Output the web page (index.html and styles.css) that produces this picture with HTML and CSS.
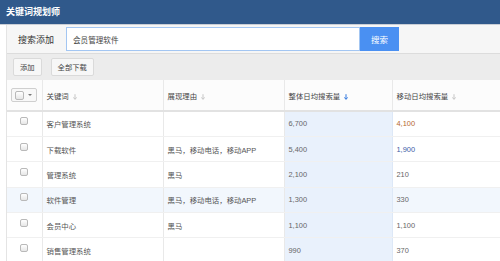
FILE: index.html
```html
<!DOCTYPE html>
<html>
<head>
  <meta charset="utf-8">
  <link rel="stylesheet" href="styles.css">
</head>
<body>
<header class="topbar">关键词规划师</header>
<main class="panel">
  <div class="search-row">
    <label for="kw">搜索添加</label>
    <div class="search-box">
      <input id="kw" type="text" value="会员管理软件">
      <button type="button" class="search-btn">搜索</button>
    </div>
  </div>
  <div class="toolbar">
    <button type="button" class="tool-btn">添加</button>
    <button type="button" class="tool-btn">全部下载</button>
  </div>
  <table class="kw-table">
    <colgroup>
      <col class="c-check">
      <col class="c-word">
      <col class="c-reason">
      <col class="c-total">
      <col class="c-mobile">
    </colgroup>
    <thead>
      <tr>
        <th><span class="check-all"><span class="box"></span><span class="caret"></span></span></th>
        <th>关键词 <svg class="sort" viewBox="0 0 5 7"><path d="M2.5 0v6M0.5 4l2 2.5 2-2.5"/></svg></th>
        <th>展现理由 <svg class="sort" viewBox="0 0 5 7"><path d="M2.5 0v6M0.5 4l2 2.5 2-2.5"/></svg></th>
        <th class="active">整体日均搜索量 <svg class="sort on" viewBox="0 0 5 7"><path d="M2.5 0v6M0.5 4l2 2.5 2-2.5"/></svg></th>
        <th>移动日均搜索量 <svg class="sort" viewBox="0 0 5 7"><path d="M2.5 0v6M0.5 4l2 2.5 2-2.5"/></svg></th>
      </tr>
    </thead>
    <tbody>
      <tr>
        <td><span class="box"></span></td>
        <td>客户管理系统</td>
        <td></td>
        <td class="total">6,700</td>
        <td class="num orange">4,100</td>
      </tr>
      <tr>
        <td><span class="box"></span></td>
        <td>下载软件</td>
        <td>黑马，移动电话，移动APP</td>
        <td class="total">5,400</td>
        <td class="num blue">1,900</td>
      </tr>
      <tr>
        <td><span class="box"></span></td>
        <td>管理系统</td>
        <td>黑马</td>
        <td class="total">2,100</td>
        <td class="num">210</td>
      </tr>
      <tr class="hover">
        <td><span class="box"></span></td>
        <td>软件管理</td>
        <td>黑马，移动电话，移动APP</td>
        <td class="total">1,300</td>
        <td class="num">330</td>
      </tr>
      <tr>
        <td><span class="box"></span></td>
        <td>会员中心</td>
        <td>黑马</td>
        <td class="total">1,100</td>
        <td class="num">1,100</td>
      </tr>
      <tr>
        <td><span class="box"></span></td>
        <td>销售管理系统</td>
        <td></td>
        <td class="total">990</td>
        <td class="num">370</td>
      </tr>
    </tbody>
  </table>
</main>
</body>
</html>
```

FILE: styles.css
```css
html, body {
  margin: 0;
  padding: 0;
  overflow: hidden;
  background: #fff;
  font-family: "Liberation Sans", "Noto Sans CJK SC", sans-serif;
  color: #555;
}

/* 顶部标题栏 */
.topbar {
  height: 24px;
  line-height: 24px;
  padding-left: 6px;
  background: #30598b;
  border-bottom: 1px solid #c9ced6;
  color: #fff;
  font-size: 9px;
  font-weight: bold;
}

.panel {
  margin-left: 6px;
  border-left: 1px solid #e4e4e4;
}

/* 搜索 */
.search-row {
  display: flex;
  align-items: center;
  height: 28px;
  padding-left: 11px;
  background: #f6f6f6;
  border-bottom: 1px solid #dcdcdc;
}
.search-row label {
  width: 48px;
  font-size: 9px;
  color: #333;
}
.search-box {
  display: flex;
  height: 24px;
}
.search-box input {
  box-sizing: border-box;
  width: 294px;
  height: 24px;
  margin: 0;
  padding: 0 6px;
  border: 1px solid #a3c6f2;
  font-family: inherit;
  font-size: 7.6px;
  color: #444;
  outline: none;
}
.search-btn {
  width: 39px;
  height: 24px;
  margin: 0;
  border: none;
  background: #4a90f2;
  color: #fff;
  font-family: inherit;
  font-size: 8.5px;
}

/* 工具栏 */
.toolbar {
  display: flex;
  align-items: center;
  gap: 9px;
  height: 26px;
  padding-left: 6px;
  background: #ececec;
}
.tool-btn {
  height: 18px;
  padding: 0 6px;
  margin: 0;
  border: 1px solid #dadada;
  border-radius: 2px;
  background: #f7f7f7;
  font-family: inherit;
  font-size: 7.3px;
  color: #444;
}

/* 表格 */
.kw-table {
  table-layout: fixed;
  border-collapse: collapse;
  width: 100%;
  font-size: 7.4px;
}
.c-check { width: 35px; }
.c-word { width: 121px; }
.c-reason { width: 121px; }
.c-total { width: 108px; }

.kw-table th, .kw-table td {
  box-sizing: border-box;
  padding: 0 0 0 4px;
  border-right: 1px solid #e9e9e9;
  text-align: left;
  white-space: nowrap;
  overflow: hidden;
}
.kw-table th:last-child, .kw-table td:last-child {
  border-right: none;
}
.kw-table th {
  height: 31px;
  background: #fcfcfc;
  border-bottom: 2px solid #e2e2e2;
  font-weight: normal;
  color: #444;
}
.kw-table td {
  height: 25.4px;
  border-bottom: 1px solid #f0f0f0;
}
.kw-table th:first-child {
  padding-left: 4px;
}
.kw-table td:first-child {
  padding-left: 0;
  text-align: center;
}
.kw-table tr.hover td {
  background: #f2f7fd;
}
.kw-table td.total,
.kw-table tr.hover td.total {
  background: #e9f1fc;
  border-right-color: #dde8f7;
}
.num { color: #666; }
.total { color: #666; }
.orange { color: #b5692e; }
.blue { color: #3c5ea6; }

.sort {
  width: 4px;
  height: 6px;
  margin-left: 2px;
  vertical-align: -1px;
  fill: none;
  stroke: #c4c4c4;
  stroke-width: 1.2;
}
.sort.on {
  stroke: #2b74de;
}

/* 复选框 */
.box {
  display: inline-block;
  box-sizing: border-box;
  width: 8px;
  height: 8px;
  border: 1px solid #b9b9b9;
  border-radius: 2px;
  background: linear-gradient(#fff, #e6e6e6);
  vertical-align: middle;
  position: relative;
  top: -3px;
}
.check-all {
  display: inline-flex;
  align-items: center;
  gap: 4px;
  box-sizing: border-box;
  width: 26px;
  height: 14px;
  padding-left: 3px;
  border: 1px solid #cfcfcf;
  border-radius: 2px;
  background: #f8f8f8;
  vertical-align: middle;
}
.check-all .box {
  top: 0;
  width: 9px;
  height: 9px;
}
.caret {
  width: 0;
  height: 0;
  border-left: 2px solid transparent;
  border-right: 2px solid transparent;
  border-top: 2px solid #777;
}
```
